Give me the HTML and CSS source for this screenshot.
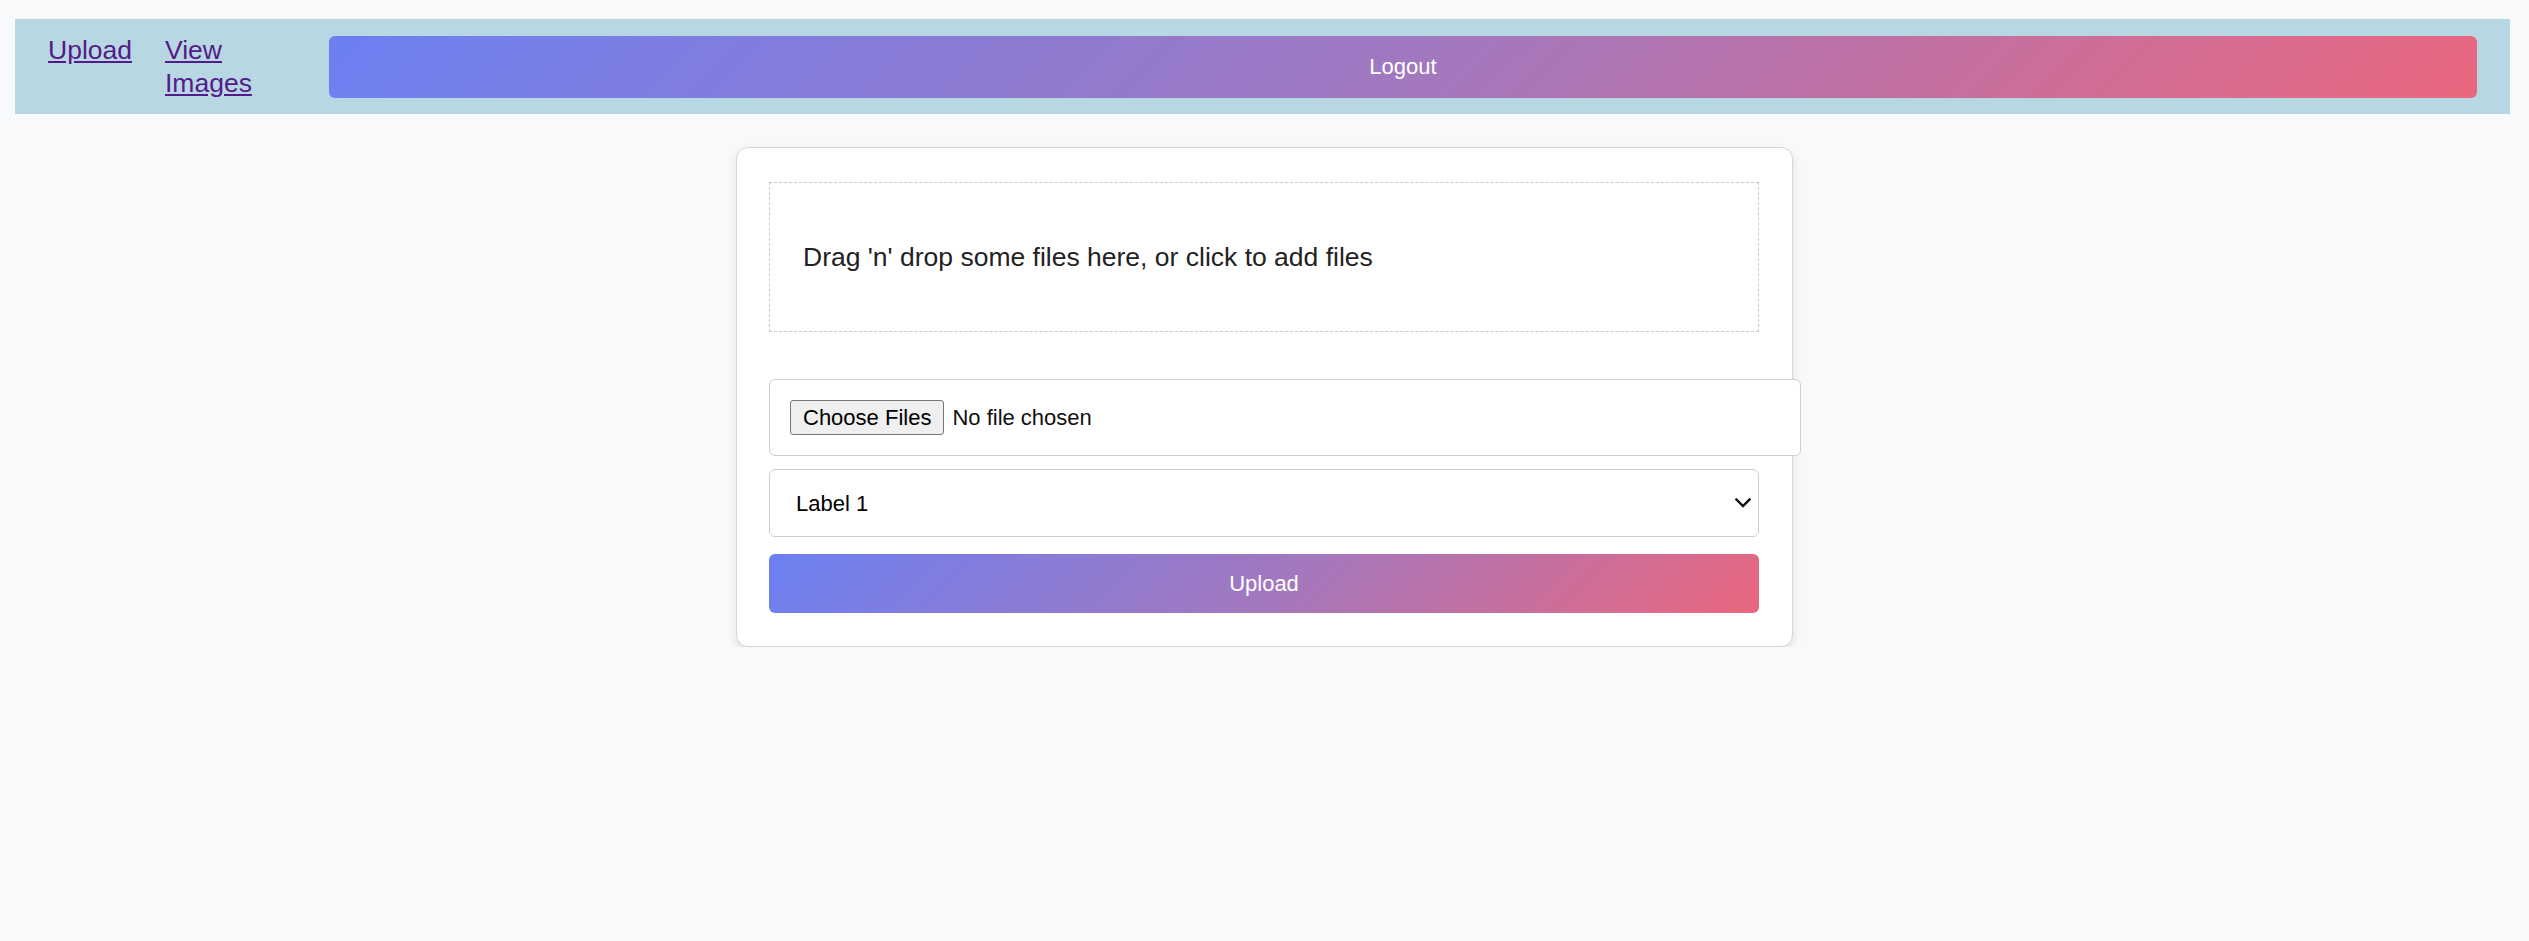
FILE: index.html
```html
<!DOCTYPE html>
<html lang="en">
<head>
<meta charset="utf-8">
<title>Upload</title>
<link rel="stylesheet" href="styles.css">
</head>
<body>
<nav class="navbar">
  <ul class="nav-list">
    <li class="nav-item"><a class="nav-link" href="#">Upload</a></li>
    <li class="nav-item nav-item-narrow"><a class="nav-link" href="#">View Images</a></li>
  </ul>
  <button class="btn-gradient btn-logout" type="button">Logout</button>
</nav>
<main class="page">
  <section class="card">
    <div class="dropzone">
      <p class="dropzone-text">Drag 'n' drop some files here, or click to add files</p>
    </div>
    <form class="upload-form">
      <input class="file-input" type="file" multiple>
      <div class="select-wrap">
        <select class="label-select">
          <option>Label 1</option>
          <option>Label 2</option>
          <option>Label 3</option>
        </select>
        <svg class="select-chevron" width="16" height="10" viewBox="0 0 16 10" aria-hidden="true">
          <path d="M1.5 1.5 L8 8 L14.5 1.5" fill="none" stroke="#111" stroke-width="2.4" stroke-linecap="square"/>
        </svg>
      </div>
      <button class="btn-gradient btn-upload" type="button">Upload</button>
    </form>
  </section>
</main>
</body>
</html>
```
FILE: styles.css
```css
html, body {
  margin: 0;
  padding: 0;
}
body {
  background: #f8f9fa;
  font-family: "Liberation Sans", Arial, sans-serif;
  color: #000;
}

.navbar {
  display: flex;
  align-items: flex-start;
  margin: 19px 19px 0 15px;
  padding: 17px 33px 16px 33px;
  background: #b7d8e3;
}
.nav-list {
  display: flex;
  align-items: flex-start;
  list-style: none;
  margin: -2px 0 -4px 0;
  padding: 0;
}
.nav-item {
  margin-right: 33px;
  flex: 0 0 auto;
}
.nav-item-narrow {
  width: 131px;
}
.nav-link {
  font-size: 26.5px;
  line-height: 33px;
  color: #551a8b;
  text-decoration: underline;
}

.btn-gradient {
  border: none;
  color: #fff;
  font-family: "Liberation Sans", Arial, sans-serif;
  font-size: 22px;
  border-radius: 6px;
  background: linear-gradient(135deg, #6c80f2 0%, #a178c0 50%, #ea677e 100%);
  cursor: pointer;
}
.btn-logout {
  flex: 1 1 auto;
  height: 62px;
}

.page {
  display: flex;
  justify-content: center;
  padding-top: 33px;
}
.card {
  box-sizing: border-box;
  width: 1057px;
  background: #fff;
  border: 1px solid #d6d6d6;
  border-radius: 12px;
  box-shadow: 0 4px 10px rgba(0, 0, 0, 0.1);
  padding: 34px 33px 33px 32px;
}

.dropzone {
  box-sizing: border-box;
  height: 150px;
  border: 1px dashed #c9c9c9;
  display: flex;
  align-items: center;
  padding: 0 33px;
}
.dropzone-text {
  margin: 0;
  font-size: 26.5px;
  color: #222;
}

.upload-form {
  display: flex;
  flex-direction: column;
  margin-top: 47px;
}
.file-input {
  width: 100%;
  box-sizing: content-box;
  padding: 20px;
  border: 1px solid #cfcfcf;
  border-radius: 6px;
  font-family: "Liberation Sans", Arial, sans-serif;
  font-size: 22px;
  color: #111;
  background: #fff;
  height: 35px;
  margin: 0;
}
.file-input::file-selector-button {
  font-family: "Liberation Sans", Arial, sans-serif;
  font-size: 22px;
  height: 35px;
  padding: 0 12px;
  margin: 0 8px 0 0;
  border: 1px solid #767676;
  border-radius: 3px;
  background: #efefef;
  color: #000;
}

.select-wrap {
  position: relative;
  margin-top: 13px;
}
.label-select {
  -webkit-appearance: none;
  appearance: none;
  width: 100%;
  height: 68px;
  box-sizing: border-box;
  padding: 0 26px;
  border: 1px solid #cfcfcf;
  border-radius: 6px;
  background: #fff;
  font-family: "Liberation Sans", Arial, sans-serif;
  font-size: 22px;
  color: #000;
}
.select-chevron {
  position: absolute;
  right: 8px;
  top: 29px;
  pointer-events: none;
}

.btn-upload {
  margin-top: 17px;
  height: 59px;
  width: 100%;
}
```
